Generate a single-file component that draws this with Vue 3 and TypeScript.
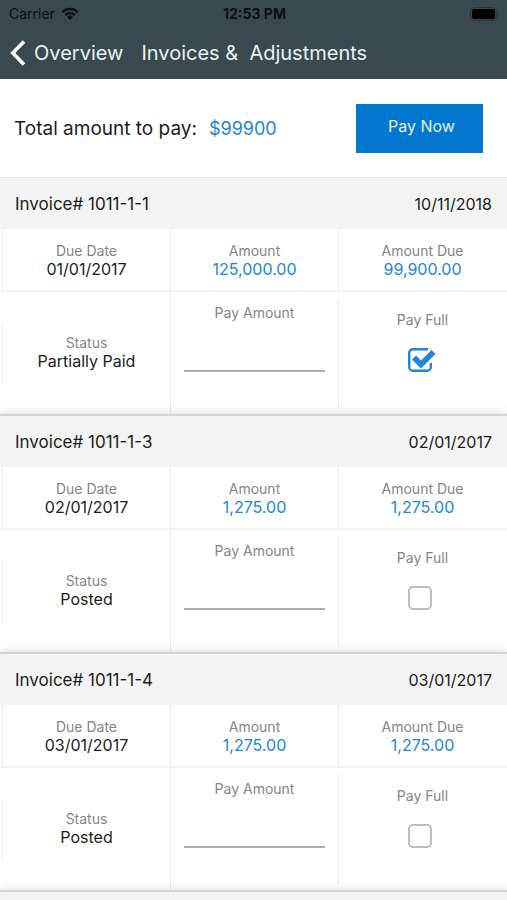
<script setup lang="ts">
import { reactive } from 'vue'

interface Invoice {
  id: string
  date: string
  dueDate: string
  amount: string
  amountDue: string
  status: string
  payAmount: string
  payFull: boolean
}

const total = '$99900'

const invoices = reactive<Invoice[]>([
  { id: '1011-1-1', date: '10/11/2018', dueDate: '01/01/2017', amount: '125,000.00', amountDue: '99,900.00', status: 'Partially Paid', payAmount: '', payFull: true },
  { id: '1011-1-3', date: '02/01/2017', dueDate: '02/01/2017', amount: '1,275.00', amountDue: '1,275.00', status: 'Posted', payAmount: '', payFull: false },
  { id: '1011-1-4', date: '03/01/2017', dueDate: '03/01/2017', amount: '1,275.00', amountDue: '1,275.00', status: 'Posted', payAmount: '', payFull: false },
])
</script>

<template>
  <div class="screen">
    <header class="top">
      <div class="status-bar">
        <span class="carrier">
          Carrier
          <svg class="wifi" viewBox="0 0 18 13" aria-hidden="true">
            <path d="M1.3 5.2a11 11 0 0 1 15.4 0" />
            <path d="M4.1 8.1a7 7 0 0 1 9.8 0" />
            <path class="dot" d="M9 13 6 10a4.3 4.3 0 0 1 6 0z" />
          </svg>
        </span>
        <span class="clock">12:53 PM</span>
        <svg class="battery" viewBox="0 0 30 14" aria-hidden="true">
          <rect class="shell" x="0.5" y="0.5" width="26" height="13" rx="4" />
          <rect x="2" y="2" width="23" height="10" rx="2.5" />
          <path class="shell-tip" d="M28 5v4a2.2 2.2 0 0 0 0-4z" />
        </svg>
      </div>
      <nav class="nav">
        <a class="back" href="#overview">
          <svg class="chevron" viewBox="0 0 16 26" aria-hidden="true">
            <path d="M14 1.5 2.8 13 14 24.5" />
          </svg>
          Overview
        </a>
        <h1 class="title">Invoices &amp;&nbsp; Adjustments</h1>
      </nav>
    </header>

    <section class="summary">
      <span class="summary-label">Total amount to pay:</span>
      <span class="summary-value">{{ total }}</span>
      <button class="pay-now" type="button">Pay Now</button>
    </section>

    <main class="list">
      <article v-for="invoice in invoices" :key="invoice.id" class="invoice">
        <div class="bar">
          <h2 class="bar-title">Invoice# {{ invoice.id }}</h2>
          <span class="bar-date">{{ invoice.date }}</span>
        </div>
        <div class="row figures">
          <div class="cell">
            <span class="label">Due Date</span>
            <span class="value">{{ invoice.dueDate }}</span>
          </div>
          <div class="cell">
            <span class="label">Amount</span>
            <span class="value money">{{ invoice.amount }}</span>
          </div>
          <div class="cell">
            <span class="label">Amount Due</span>
            <span class="value money">{{ invoice.amountDue }}</span>
          </div>
        </div>
        <div class="row actions">
          <div class="cell status">
            <span class="label">Status</span>
            <span class="value">{{ invoice.status }}</span>
          </div>
          <div class="cell pay-amount">
            <label class="label" :for="`amount-${invoice.id}`">Pay Amount</label>
            <input :id="`amount-${invoice.id}`" v-model="invoice.payAmount" class="amount-input" type="text" inputmode="decimal" />
          </div>
          <div class="cell pay-full">
            <label class="label" :for="`full-${invoice.id}`">Pay Full</label>
            <span class="check">
              <input :id="`full-${invoice.id}`" v-model="invoice.payFull" class="check-input" type="checkbox" />
              <svg v-if="invoice.payFull" class="check-mark" viewBox="0 0 29 24" aria-hidden="true">
                <path class="check-box" d="M20 1.2H5A3.8 3.8 0 0 0 1.2 5v14A3.8 3.8 0 0 0 5 22.8h14a3.8 3.8 0 0 0 3.8-3.8v-4" />
                <path class="check-tick" d="M6 9.5 13 16.5 25.5 4" />
              </svg>
            </span>
          </div>
        </div>
      </article>
      <div class="bar next"></div>
    </main>
  </div>
</template>

<style>
body {
  margin: 0;
  background: #fff;
}
</style>

<style scoped>
.screen {
  display: flex;
  flex-direction: column;
  height: 100vh;
  overflow: hidden;
  font-family: Inter, "Liberation Sans", sans-serif;
  color: #1c1c1c;
  background: #fff;
}

.top {
  flex: none;
  background: #3a4950;
}

.status-bar {
  display: grid;
  grid-template-columns: 1fr auto 1fr;
  align-items: center;
  height: 27px;
  padding: 0 7px 0 9px;
  font-size: 14px;
  color: #0b1013;
}

.carrier {
  display: flex;
  align-items: center;
  gap: 6px;
}

.wifi {
  width: 18px;
  height: 13px;
  fill: none;
  stroke: #0b1013;
  stroke-width: 2.4;
}

.wifi .dot {
  fill: #0b1013;
  stroke: none;
}

.clock {
  font-weight: 700;
}

.battery {
  justify-self: end;
  width: 30px;
  height: 14px;
  fill: #000;
}

.battery .shell {
  fill: none;
  stroke: #28343a;
}

.battery .shell-tip {
  fill: #28343a;
}

.nav {
  display: flex;
  align-items: center;
  gap: 18px;
  height: 52px;
  color: #e9f1f4;
  padding: 0 10px;
  font-size: 20px;
}

.back {
  display: flex;
  align-items: center;
  gap: 8px;
  color: inherit;
  text-decoration: none;
}

.chevron {
  width: 16px;
  height: 26px;
  fill: none;
  stroke: #fff;
  stroke-width: 3.6;
}

.title {
  margin: 0;
  font-size: 20px;
  font-weight: 400;
  white-space: nowrap;
}

.summary {
  display: flex;
  flex: none;
  align-items: center;
  height: 98px;
  padding: 0 24px 0 14px;
  border-bottom: 1px solid #e8e8e8;
  font-size: 18px;
}

.summary-label {
  font-size: 19px;
}

.summary-value {
  margin-left: 12px;
  color: #2186d6;
}

.pay-now {
  width: 127px;
  height: 49px;
  margin-left: auto;
  padding: 0 0 4px 4px;
  border: 0;
  background: #0277d0;
  color: #e4f3ff;
  font: inherit;
  font-size: 16px;
}

.list {
  display: flex;
  flex: 1;
  flex-direction: column;
  min-height: 0;
}

.invoice {
  flex: none;
}

.bar {
  display: flex;
  align-items: center;
  justify-content: space-between;
  height: 51px;
  padding: 0 15px;
  background: #f3f3f3;
}

.invoice + .bar,
.invoice + .invoice .bar {
  box-shadow: 0 -2px 1px #d4d4d4, 0 -2px 12px rgba(0, 0, 0, 0.14);
  clip-path: inset(-14px 0 0 0);
}

.bar.next {
  flex: 1;
  height: auto;
}

.bar-title {
  margin: 0;
  font-size: 17px;
  font-weight: 400;
}

.bar-date {
  font-size: 16px;
}

.row {
  display: grid;
  grid-template-columns: repeat(3, 1fr);
  padding: 0 1px 0 2px;
}

.figures {
  height: 61px;
  border-bottom: 2px solid #f2f2f2;
}

.actions {
  height: 124px;
}

.cell {
  display: flex;
  box-sizing: border-box;
  flex-direction: column;
  align-items: center;
  justify-content: center;
  border-left: 1px solid #ebebeb;
}

.figures .cell {
  padding-top: 1px;
}

.label {
  font-size: 14px;
  line-height: 18px;
  color: #858585;
}

.value {
  font-size: 16px;
  line-height: 19px;
}

.money {
  color: #2186d6;
}

.status {
  align-self: center;
  height: 62px;
  padding-bottom: 3px;
}

.pay-amount {
  justify-content: flex-start;
  padding: 12px 13px 0;
}

.amount-input {
  box-sizing: border-box;
  width: 100%;
  height: 50px;
  padding: 16px 4px 0;
  border: 0;
  border-bottom: 2px solid #acaeb1;
  border-radius: 0;
  outline: 0;
  background: transparent;
  color: inherit;
  font: inherit;
  font-size: 16px;
}

.pay-full {
  gap: 19px;
  justify-content: flex-start;
  margin: 6px 0 8px;
  padding-top: 13px;
}

.check {
  position: relative;
  display: block;
  width: 29px;
  height: 24px;
}

.check-input {
  display: block;
  width: 24px;
  height: 24px;
  margin: 0;
  border: 2px solid #bdbdbd;
  border-radius: 5px;
  appearance: none;
}

.check-input:checked {
  border-color: transparent;
}

.check-mark {
  position: absolute;
  inset: 0;
  width: 29px;
  height: 24px;
  fill: none;
  stroke: #2186d6;
  pointer-events: none;
}

.check-box {
  stroke-width: 2.4;
}

.check-tick {
  stroke-width: 5.6;
}
</style>
